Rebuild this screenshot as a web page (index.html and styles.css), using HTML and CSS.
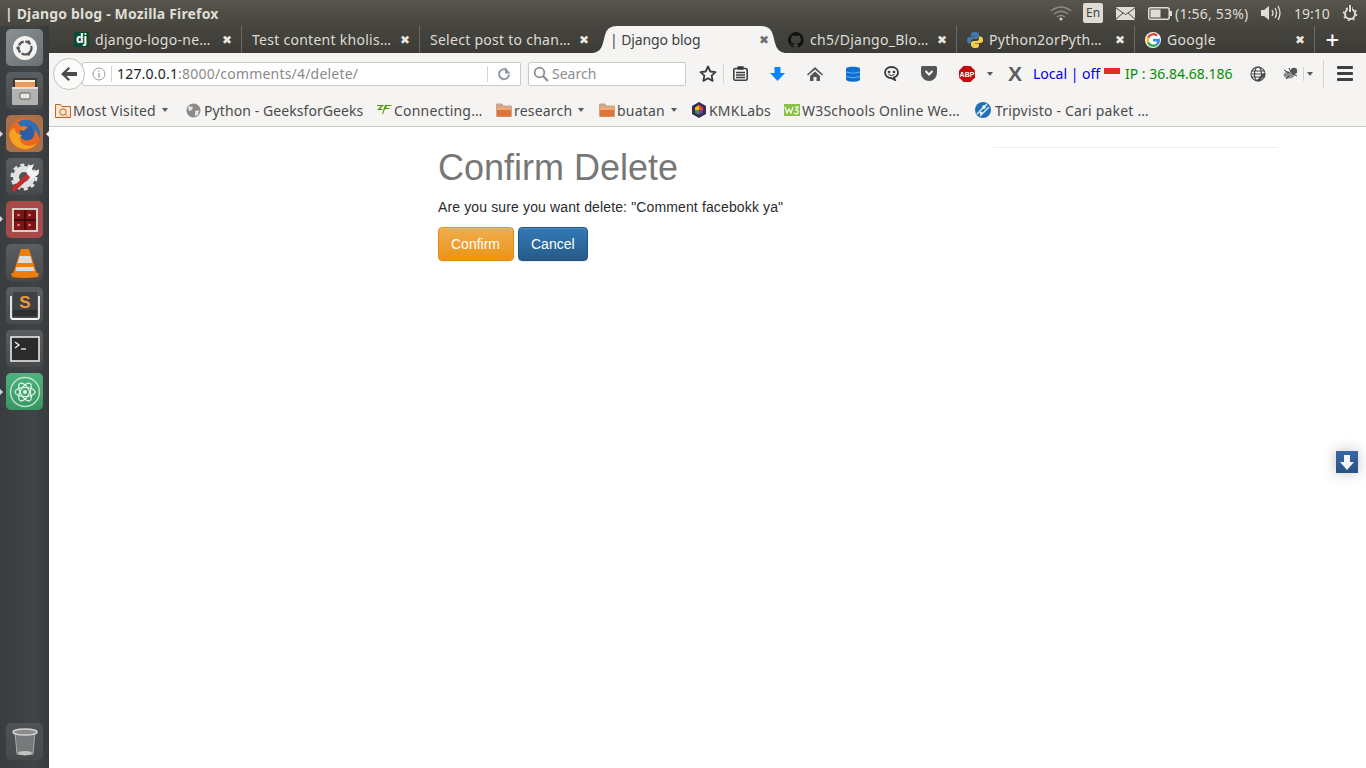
FILE: index.html
```html
<!DOCTYPE html>
<html lang="en">
<head>
<meta charset="utf-8">
<title>| Django blog</title>
<link rel="stylesheet" href="styles.css">
</head>
<body>
<div class="titlebar">
  <div class="wintitle">| Django blog - Mozilla Firefox</div>
  <div class="tray">
    <svg class="t-wifi" width="22" height="16" viewBox="0 0 22 16"><g fill="none" stroke="#8d8b84" stroke-width="1.5"><path d="M1 6q10-8 20 0"/><path d="M4 9q7-5.500 14 0"/><path d="M7 12q4-3 8 0"/></g><circle cx="11" cy="14" r="1.500" fill="#d8d6cf"/></svg>
    <span class="t-lang">En</span>
    <svg class="t-mail" width="19" height="13" viewBox="0 0 19 13"><rect width="19" height="13" rx="1" fill="#dfddd6"/><path d="M0 1l9.500 6.500L19 1M0 12l7-6M19 12l-7-6" fill="none" stroke="#4a4943" stroke-width="1"/></svg>
    <svg class="t-batt" width="24" height="13" viewBox="0 0 24 13"><rect x=".75" y=".75" width="20.500" height="11.500" rx="2" fill="none" stroke="#dfddd6" stroke-width="1.500"/><rect x="2.500" y="2.500" width="10" height="8" fill="#dfddd6"/><rect x="22" y="4" width="2" height="5" fill="#dfddd6"/></svg>
    <span class="t-text t-battext">(1:56, 53%)</span>
    <svg class="t-vol" width="20" height="16" viewBox="0 0 20 16"><path d="M0 5h3l5-4v14l-5-4H0z" fill="#dfddd6"/><g fill="none" stroke="#dfddd6" stroke-width="1.300"><path d="M11 5q2 3 0 6"/><path d="M14 3q3 5 0 10"/><path d="M17 1q4 7 0 14"/></g></svg>
    <span class="t-text t-clock">19:10</span>
    <svg class="t-power" width="16" height="16" viewBox="0 0 16 16"><circle cx="8" cy="9" r="5" fill="none" stroke="#dfddd6" stroke-width="2"/><circle cx="8" cy="9" r="6.500" fill="none" stroke="#dfddd6" stroke-width="1.500" stroke-dasharray="2 3.100"/><path d="M8 0v8" stroke="#46453f" stroke-width="4"/><path d="M8 0v7" stroke="#dfddd6" stroke-width="2"/></svg>
  </div>
</div>

<div class="shell">
  <aside class="launcher">
    <div class="tile t-dash"><svg width="26" height="26" viewBox="0 0 26 26"><circle cx="13" cy="13" r="12" fill="#f2f2f0"/><circle cx="13" cy="13" r="6.500" fill="none" stroke="#55585a" stroke-width="2.200" stroke-dasharray="6 1.500"/><circle cx="6" cy="13" r="1.700" fill="#55585a"/><circle cx="16.500" cy="7" r="1.700" fill="#55585a"/><circle cx="16.500" cy="19" r="1.700" fill="#55585a"/></svg></div>
    <div class="tile t-files"><svg width="30" height="30" viewBox="0 0 30 30"><path d="M3 2h24v10H3z" fill="#3d3a37"/><path d="M5 6h20v6H5z" fill="#ee9a5a"/><path d="M5 4h20v2H5z" fill="#f7f4ea"/><rect x="2" y="11" width="26" height="18" rx="1" fill="#b2b2b0"/><rect x="2" y="11" width="26" height="2" fill="#e0e0de"/><rect x="10" y="17" width="10" height="6" rx="1" fill="#e9e9e7" stroke="#5c5c5a"/></svg></div>
    <div class="tile t-firefox"><svg width="34" height="34" viewBox="0 0 32 32"><circle cx="16" cy="16" r="15" fill="#e8681f"/><path d="M9 5q9-6 18 2q5 7 3 14q-2-8-7-10q-3-2-6-1q-3 1-5-1z" fill="#2f6fb5"/><circle cx="18" cy="15" r="7" fill="#2a5ea6"/><path d="M1 16q1 9 9 13q10 4 17-4q-10 5-15-2q-2-4 1-6q-6-1-7-7q-4 2-5 6z" fill="#f4a21f"/><path d="M10 10q5-3 9 0q-3 1-4 3q-3 0-5-3z" fill="#f07a1e"/></svg></div>
    <div class="tile t-tools"><svg width="32" height="32" viewBox="0 0 32 32"><circle cx="15" cy="16" r="8" fill="none" stroke="#e2e2e2" stroke-width="6"/><circle cx="15" cy="16" r="12" fill="none" stroke="#e2e2e2" stroke-width="3" stroke-dasharray="4 3.500"/><path d="M5 28l15-14" stroke="#c22d2d" stroke-width="4.500" stroke-linecap="round"/><path d="M18 13q-1-8 7-10l-2 5 2 3 5-3q1 8-8 9z" fill="#f4f4f4"/></svg></div>
    <div class="tile t-red"><svg width="28" height="28" viewBox="0 0 28 28"><rect x="1" y="2" width="26" height="24" fill="#d3cfcb"/><rect x="3" y="4" width="22" height="20" fill="#7e1414"/><path d="M3 14h22M14 4v20" stroke="#2b0b0b" stroke-width="1.500"/><path d="M6 8l3 1-3 1M17 8l3 1-3 1M6 18l3 1-3 1M17 18l3 1-3 1" stroke="#ef7777" fill="none"/></svg></div>
    <div class="tile t-vlc"><svg width="30" height="32" viewBox="0 0 30 32"><path d="M11 2h8l8 25H3z" fill="#f07f09"/><path d="M9.600 9h10.800l2 7H7.600zM6.500 20h17l1 4h-19z" fill="#dcdcdc"/><path d="M1 26h28l-1 4q-13 2-26 0z" fill="#ec7d0c"/></svg></div>
    <div class="tile t-sublime"><svg width="32" height="30" viewBox="0 0 32 30"><path d="M2 5v21q0 2 2 2h24q2 0 2-2V5" fill="none" stroke="#f2f2f2" stroke-width="1.800"/><rect x="4" y="1" width="24" height="25" fill="#3f4143"/><rect x="4" y="19" width="24" height="6" fill="#2d2e30"/><text x="16" y="17" class="sub-s">S</text></svg></div>
    <div class="tile t-term"><svg width="30" height="26" viewBox="0 0 30 26"><rect x="1" y="1" width="28" height="24" fill="#2b2b2b" stroke="#e8e8e8" stroke-width="1.600"/><path d="M5 6l4 3-4 3" fill="none" stroke="#f2f2f2" stroke-width="1.300"/><path d="M11 13h5" stroke="#f2f2f2" stroke-width="1.300"/></svg></div>
    <div class="tile t-atom"><svg width="32" height="32" viewBox="0 0 32 32"><circle cx="16" cy="16" r="14.500" fill="none" stroke="#bfe6cd" stroke-width="1.300"/><g fill="none" stroke="#e4f5ea" stroke-width="1.200"><ellipse cx="16" cy="16" rx="10" ry="4.500"/><ellipse cx="16" cy="16" rx="10" ry="4.500" transform="rotate(60 16 16)"/><ellipse cx="16" cy="16" rx="10" ry="4.500" transform="rotate(120 16 16)"/></g><circle cx="16" cy="16" r="2" fill="#e4f5ea"/></svg></div>
    <div class="launcher-gap"></div>
    <div class="tile t-trash"><svg width="26" height="30" viewBox="0 0 26 30"><path d="M3 5l2 22q8 2 16 0l2-22" fill="#777a7b" stroke="#a9abab" stroke-width="1"/><ellipse cx="13" cy="5" rx="12" ry="3" fill="#8a8c8c" stroke="#d4d4d4" stroke-width="1.500"/><ellipse cx="13" cy="26" rx="7" ry="2" fill="#c2c4c4"/></svg></div>
    <span class="pip pip-ff-l"></span><span class="pip pip-red"></span><span class="pip pip-atom"></span><span class="pip pip-ff-r"></span>
  </aside>

  <div class="browser">
    <div class="tabs">
      <div class="tab t1"><span class="favicon dj">dj</span><span class="tabname">django-logo-ne…</span><span class="x">✖</span></div>
      <div class="tab"><span class="tabname">Test content kholis…</span><span class="x">✖</span></div>
      <div class="tab t3"><span class="tabname">Select post to chan…</span><span class="x">✖</span></div>
      <div class="tab active">
        <svg class="tabshape" width="192" height="28" viewBox="0 0 192 28"><path d="M0 28q8-1 10-10l2-8q2-9 12-9h144q10 0 12 9l2 8q2 9 10 10z" fill="#f5f4f2"/></svg>
        <span class="tabname">| Django blog</span><span class="x">✖</span>
      </div>
      <div class="tab t5"><svg class="favicon" width="16" height="16" viewBox="0 0 16 16"><path d="M8 0a8 8 0 0 0-2.500 15.600c.4.1.5-.2.500-.4v-1.400c-2.200.5-2.700-1-2.700-1-.4-.9-.9-1.200-.9-1.200-.7-.5.1-.5.100-.5.8.1 1.200.8 1.200.8.700 1.200 1.900.9 2.300.7.100-.5.300-.9.500-1.100-1.800-.2-3.700-.9-3.700-4 0-.9.300-1.600.8-2.100-.1-.2-.4-1 .1-2.100 0 0 .7-.2 2.200.8a7.600 7.600 0 0 1 4 0c1.500-1 2.200-.8 2.200-.8.400 1.100.2 1.900.1 2.100.5.600.8 1.300.8 2.100 0 3.100-1.900 3.700-3.700 3.900.3.300.6.800.6 1.500v2.200c0 .2.100.5.600.4A8 8 0 0 0 8 0z" fill="#111"/></svg><span class="tabname">ch5/Django_Blo…</span><span class="x">✖</span></div>
      <div class="tab"><svg class="favicon" width="16" height="16" viewBox="0 0 16 16"><path d="M8 0C4 0 4 1.500 4 3v1.500h4.200V5H2.500C1 5 0 6 0 8s1 3.500 2.500 3.500H4V9.500C4 8 5 7 6.500 7h3C11 7 12 6 12 4.500V3c0-1.500-1-3-4-3z" fill="#3f7cad"/><path d="M8 16c4 0 4-1.500 4-3v-1.500H7.800V11h5.700c1.500 0 2.500-1 2.500-3s-1-3.500-2.500-3.500H12v2C12 8 11 9 9.500 9h-3C5 9 4 10 4 11.500V13c0 1.500 1 3 4 3z" fill="#f5cf4b"/></svg><span class="tabname">Python2orPyth…</span><span class="x">✖</span></div>
      <div class="tab t7"><svg class="favicon" width="16" height="16" viewBox="0 0 16 16"><circle cx="8" cy="8" r="8" fill="#fff"/><path d="M8 3.200a4.800 4.800 0 0 1 3.300 1.300l1.700-1.700A7 7 0 0 0 2 5l2 1.600A4.800 4.800 0 0 1 8 3.200z" fill="#e94235"/><path d="M2 5a7 7 0 0 0 0 6l2-1.600a4.800 4.800 0 0 1 0-2.800z" fill="#fabb05"/><path d="M2 11a7 7 0 0 0 11 2.200l-2-1.500A4.800 4.800 0 0 1 4 9.400z" fill="#34a853"/><path d="M15 8l-.1-1.300H8v2.700h3.900A3.400 3.400 0 0 1 11 11.700l2 1.500A7 7 0 0 0 15 8z" fill="#4285f4"/></svg><span class="tabname">Google</span><span class="x">✖</span></div>
      <div class="newtab">+</div>
    </div>

    <div class="navbar">
      <div class="urlwrap">
        <div class="urlbar">
          <svg class="info" width="14" height="14" viewBox="0 0 14 14"><circle cx="7" cy="7" r="6" fill="none" stroke="#999" stroke-width="1"/><path d="M7 6v4.500M7 3.500v1.300" stroke="#999" stroke-width="1.300"/></svg>
          <span class="ubar"></span>
          <span class="url"><span class="host">127.0.0.1</span>:8000/comments/4/delete/</span>
          <span class="ubar ubar-r"></span>
          <svg class="reload" width="14" height="14" viewBox="0 0 14 14"><path d="M12 7.500A5 5 0 1 1 9.800 3" fill="none" stroke="#8a9aa8" stroke-width="2"/><path d="M8 0v6.500h5.500z" fill="#8a9aa8"/></svg>
        </div>
        <div class="backbtn"><svg width="16" height="14" viewBox="0 0 16 14"><path d="M7.500 0l1.500 1.500L5.500 5H16v4H5.500L9 12.500 7.500 14 0 7z" fill="#4c4c4c"/></svg></div>
      </div>
      <div class="searchbar">
        <svg width="16" height="16" viewBox="0 0 16 16"><circle cx="6.500" cy="6.500" r="4.800" fill="none" stroke="#8f8f8f" stroke-width="1.800"/><path d="M10 10l5 5" stroke="#8f8f8f" stroke-width="2.200"/></svg>
        <span>Search</span>
      </div>
      <div class="tools">
        <span class="slot s-star"><svg width="18" height="17" viewBox="0 0 18 17"><path d="M9 1.500l2.300 5 5.200.6-3.900 3.500 1.100 5.300L9 13.200l-4.700 2.700 1.100-5.300-3.900-3.500 5.200-.6z" fill="none" stroke="#3c3c3c" stroke-width="1.800" stroke-linejoin="round"/></svg></span>
        <span class="vsep"></span>
        <span class="slot s-clip"><svg width="15" height="15" viewBox="0 0 15 15"><rect x=".8" y="2.500" width="13.400" height="11.700" rx="1.500" fill="none" stroke="#3f3f3f" stroke-width="1.600"/><path d="M5 1h5v2H5zM3 6.500h9M3 9h9M3 11.500h9" stroke="#3f3f3f" stroke-width="1.400"/></svg></span>
        <span class="slot s-icon"><svg width="15" height="14" viewBox="0 0 15 14"><path d="M4.500 0h6v6H15l-7.500 8L0 6h4.500z" fill="#0a84ff"/></svg></span>
        <span class="slot s-icon"><svg width="16" height="14" viewBox="0 0 16 14"><path d="M8 0L0 7.500l1 1L8 2.500l7 6 1-1zM3 9l5-4.500L13 9v5H9.500v-4h-3v4H3z" fill="#555"/></svg></span>
        <span class="slot s-icon"><svg width="14" height="16" viewBox="0 0 14 16"><path d="M0 2.500C0 0 14 0 14 2.500v11c0 3-14 3-14 0z" fill="#0f6fd1"/><path d="M0 6q7 2.500 14 0M0 10.500q7 2.500 14 0" fill="none" stroke="#63b2f2" stroke-width="1"/></svg></span>
        <span class="slot s-icon"><svg width="15" height="15" viewBox="0 0 15 15"><path d="M7.500 1C3.500 1 1 3.500 1 6.500S3.500 12 7 12l4 2-1-2.600c2.500-.8 4-2.600 4-4.900C14 3.500 11.500 1 7.500 1z" fill="none" stroke="#383838" stroke-width="1.800"/><circle cx="5" cy="6" r="1.300" fill="#383838"/><circle cx="10" cy="6" r="1.300" fill="#383838"/><path d="M4.500 8.500q3 2 6 0" fill="none" stroke="#383838"/></svg></span>
        <span class="slot s-icon"><svg width="16" height="15" viewBox="0 0 16 15"><path d="M1.500 0h13A1.500 1.500 0 0 1 16 1.500V7a8 8 0 0 1-16 0V1.500A1.500 1.500 0 0 1 1.500 0z" fill="#555"/><path d="M4.500 5L8 8.500 11.500 5" fill="none" stroke="#f5f4f2" stroke-width="2"/></svg></span>
        <span class="slot s-icon"><svg width="18" height="18" viewBox="0 0 18 18"><path d="M5.500 1h7L17 5.500v7L12.500 17h-7L1 12.500v-7z" fill="#c40c0c"/><text x="9" y="12" class="abp">ABP</text></svg></span>
        <span class="caret c-abp"></span>
        <span class="x-logo">X</span>
        <span class="local">Local | off</span>
        <span class="flag"></span>
        <span class="ip">IP : 36.84.68.186</span>
        <span class="slot s-globe"><svg width="16" height="16" viewBox="0 0 16 16"><g fill="none" stroke="#444" stroke-width="1.100"><circle cx="8" cy="8" r="7"/><ellipse cx="8" cy="8" rx="3.500" ry="7"/><path d="M1.500 5h13M1.500 8h13M1.500 11h13"/></g><path d="M7 14l7-7 1.500 1.500-7 7z" fill="#444"/></svg></span>
        <span class="slot s-bug"><svg width="16" height="13" viewBox="0 0 16 13"><ellipse cx="6" cy="8" rx="5.500" ry="3.500" fill="#8d8d8d"/><circle cx="11" cy="4" r="3.200" fill="#555"/><path d="M1 3l5 3M6 1l2 4M3 12l3-3M14 9l-4-2" stroke="#333"/></svg></span>
        <span class="vsep v-bug"></span>
        <span class="caret c-bug"></span>
        <span class="vsep v-menu"></span>
        <span class="burger"><i></i><i></i><i></i></span>
      </div>
    </div>

    <div class="bookmarks">
      <span class="bm b-most"><svg width="16" height="16" viewBox="0 0 16 16"><path d="M.5 2.500h5l1.500 2h8.500v11H.5z" fill="#fbe6d3" stroke="#c8641f"/><circle cx="8" cy="10" r="3.200" fill="none" stroke="#c8641f"/><path d="M10.500 12.500l2 2" stroke="#c8641f"/></svg>Most Visited<span class="caret"></span></span>
      <span class="bm b-py"><svg width="15" height="15" viewBox="0 0 15 15"><circle cx="7.500" cy="7.500" r="7" fill="#8a8a8a"/><path d="M3 3l4 1-1 3-3 1-1-3zM9 8l4-1-1 5-3 1z" fill="#e2e2e2"/></svg>Python - GeeksforGeeks</span>
      <span class="bm b-zf"><svg width="16" height="10" viewBox="0 0 16 10"><path d="M1 0h7L4 4h3L6 5H1l4-4H1zM9 0h7l-1 1h-4l-1 2h4l-1 1h-4l-2 5H6z" fill="#4d9a06"/></svg>Connecting…</span>
      <span class="bm b-res"><svg class="fold" width="16" height="14" viewBox="0 0 16 14"><path d="M0 1.500Q0 .500 1 .500h5l1.500 2H15q1 0 1 1V13q0 1-1 1H1q-1 0-1-1z" fill="#c9a58c"/><path d="M1 4h14v9.500H1z" fill="#df7437"/><path d="M1 4h14v3H1z" fill="#efa779"/></svg>research<span class="caret"></span></span>
      <span class="bm b-but"><svg class="fold" width="16" height="14" viewBox="0 0 16 14"><path d="M0 1.500Q0 .500 1 .500h5l1.500 2H15q1 0 1 1V13q0 1-1 1H1q-1 0-1-1z" fill="#c9a58c"/><path d="M1 4h14v9.500H1z" fill="#df7437"/><path d="M1 4h14v3H1z" fill="#efa779"/></svg>buatan<span class="caret"></span></span>
      <span class="bm b-kmk"><svg width="16" height="16" viewBox="0 0 16 16"><path d="M8 0l7 4v8l-7 4-7-4V4z" fill="#3a2a55"/><path d="M8 3L4 5.500V8h4z" fill="#f4c20d"/><path d="M8 3l4 2.500V8H8z" fill="#e8452c"/><path d="M4 8v2.500L8 13V8z" fill="#2f9e44"/><path d="M12 8v2.500L8 13V8z" fill="#6a3fb5"/></svg>KMKLabs</span>
      <span class="bm b-w3"><svg width="16" height="12" viewBox="0 0 16 12"><rect width="16" height="12" fill="#8ac249"/><path d="M1 3l2 6 2-4 2 4 2-6M11 3h3l-2 3q3 0 2 2.500T10 9" fill="none" stroke="#fff" stroke-width="1.200"/></svg>W3Schools Online We…</span>
      <span class="bm b-trip"><svg width="16" height="16" viewBox="0 0 16 16"><circle cx="8" cy="8" r="8" fill="#1f6fb5"/><path d="M2 12L12 2M5 14L14 5" stroke="#dbeeff" stroke-width="1.500"/><circle cx="9" cy="5" r="1.800" fill="#fff"/><circle cx="6" cy="11" r="1.300" fill="#fff"/></svg>Tripvisto - Cari paket …</span>
    </div>

    <main class="page">
      <section class="content">
        <h1>Confirm Delete</h1>
        <p>Are you sure you want delete: "Comment facebokk ya"</p>
        <div class="actions">
          <a class="btn btn-warning">Confirm</a>
          <a class="btn btn-primary">Cancel</a>
        </div>
      </section>
      <aside class="side"><hr></aside>
      <div class="floatdown"><svg width="14" height="15" viewBox="0 0 14 15"><path d="M4 0h6v7h4l-7 8-7-8h4z" fill="#f2f5fa"/></svg></div>
    </main>
  </div>
</div>
</body>
</html>
```
FILE: styles.css
```css
* { box-sizing: border-box; }
html, body { margin: 0; height: 100%; overflow: hidden; }
body {
  width: 1366px;
  height: 768px;
  display: flex;
  flex-direction: column;
  font-family: "Noto Sans", "Open Sans", sans-serif;
  background: #fff;
}

/* top panel */
.titlebar {
  height: 26px;
  flex: none;
  display: flex;
  align-items: center;
  justify-content: space-between;
  padding: 0 8px 0 5px;
  background: linear-gradient(#57554c, #46453f);
  color: #dfddd6;
}
.wintitle { font-size: 14px; font-weight: 700; white-space: nowrap; letter-spacing: .17px; }
.tray { display: flex; align-items: center; height: 26px; }
.t-text { font-size: 14px; color: #dfddd6; white-space: nowrap; }
.t-lang {
  width: 20px; height: 20px; margin-left: 11px;
  background: #dedcd4; color: #45443e; border-radius: 2px;
  font-size: 12px; text-align: center; line-height: 20px;
}
.t-mail { margin-left: 13px; }
.t-batt { margin-left: 13px; }
.t-battext { margin-left: 3px; width: 77px; letter-spacing: .2px; }
.t-vol { margin-left: 9px; }
.t-clock { margin-left: 13px; width: 36px; }
.t-power { margin-left: 12px; }

.shell { flex: 1; display: flex; min-height: 0; }

/* launcher */
.launcher {
  position: relative;
  width: 49px;
  flex: none;
  display: flex;
  flex-direction: column;
  align-items: center;
  gap: 6px;
  padding: 3px 0 8px;
  background: linear-gradient(90deg, #3a3d3f, #414446 70%, #37393b);
}
.tile {
  width: 37px; height: 37px; flex: none;
  display: flex; align-items: center; justify-content: center;
  border-radius: 5px;
  background: linear-gradient(#5b5e60, #47494b);
}
.t-dash { background: linear-gradient(135deg, #8b9193, #6b7072); }
.t-firefox { background: #a9714a; }
.t-red { background: #a84a4a; }
.t-atom { background: linear-gradient(#4fb27f, #389663); }
.t-trash { background: linear-gradient(#4f5254, #484a4c); }
.launcher-gap { flex: 1; }
.sub-s { font: 700 17px "Liberation Sans", sans-serif; fill: #ef9a3e; text-anchor: middle; }
.pip {
  position: absolute; left: 0; width: 0; height: 0;
  border-left: 3px solid #d8d8d8; border-top: 3px solid transparent; border-bottom: 3px solid transparent;
}
.pip-ff-l { top: 105px; }
.pip-ff-r {
  top: 105px; left: auto; right: 0;
  border-left: 0; border-right: 3px solid #f0f0f0;
}
.pip-red { top: 190px; }
.pip-atom { top: 363px; }

.browser { flex: 1; min-width: 0; display: flex; flex-direction: column; }

/* tabs */
.tabs {
  height: 27px;
  flex: none;
  display: flex;
  padding-left: 15px;
  background: linear-gradient(#46453f, #3c3b36);
  color: #dfddd6;
  font-size: 14px;
  letter-spacing: .27px;
}
.tab {
  position: relative;
  width: 178px;
  display: flex;
  align-items: center;
  gap: 6px;
  padding: 0 9px 0 10px;
  border-right: 1px solid #6a6963;
  white-space: nowrap;
}
.tab.t1 { padding-left: 10px; }
.tab.t3 { border-right: 0; }
.tab.t5 { width: 177px; padding-left: 8px; }
.tab.t7 { width: 180px; padding-left: 10px; }
.tabname { flex: 1; overflow: hidden; position: relative; }
.favicon { flex: none; }
.dj {
  width: 15px; height: 15px; background: #0c4b33; color: #fff; letter-spacing: 0;
  font: 700 12px/14px "Noto Sans", sans-serif; text-align: center; border-radius: 1px;
}
.x { flex: none; font-size: 12px; color: #e8e6e0; position: relative; font-family: "DejaVu Sans", sans-serif; letter-spacing: 0; }
.tab.active {
  width: 182px;
  color: #3f3f3f;
  border-right: 0;
  padding: 0 11px 0 12px;
  letter-spacing: -.1px;
}
.tab.active .x { color: #6d6d6d; }
.tabshape { position: absolute; left: -5px; top: -1px; }
.newtab { width: 35px; text-align: center; font-size: 24px; line-height: 27px; color: #fff; font-weight: 500; }

/* nav toolbar */
.navbar {
  height: 41px;
  flex: none;
  display: flex;
  align-items: center;
  padding-left: 4px;
  background: #f5f4f2;
}
.urlwrap { position: relative; padding-left: 29px; flex: none; }
.urlbar {
  width: 439px; height: 24px;
  display: flex; align-items: center;
  padding: 0 9px 0 9px;
  background: #fff;
  border: 1px solid #c9c9c6;
  border-radius: 2px;
  font-size: 14px;
}
.backbtn {
  position: absolute; left: 0; top: -4px;
  width: 32px; height: 32px; border-radius: 50%;
  background: #fbfbfa; border: 1px solid #c2c2bf;
  display: flex; align-items: center; justify-content: center;
}
.ubar { width: 1px; height: 16px; background: #d4d4d2; margin: 0 5px 0 5px; flex: none; }
.ubar-r { margin: 0 9px 0 0; }
.url { flex: 1; color: #8a8a8a; white-space: nowrap; letter-spacing: .2px; }
.host { color: #222; }
.searchbar {
  margin-left: 7px;
  width: 158px; height: 24px;
  display: flex; align-items: center; gap: 3px;
  padding-left: 4px;
  background: #fff;
  border: 1px solid #c9c9c6;
  border-radius: 2px;
  color: #8d8d8d; font-size: 14px;
}
.tools { flex: 1; display: flex; align-items: center; height: 100%; }
.slot { display: flex; align-items: center; justify-content: center; flex: none; }
.s-star { width: 22px; margin-left: 11px; }
.vsep { width: 1px; height: 19px; background: #d2d2cf; flex: none; margin-left: 4px; }
.s-clip { width: 18px; margin-left: 7px; }
.s-icon { width: 38px; }
.s-clip + .s-icon { margin-left: 9px; }
.abp { font: 700 7px "Liberation Sans", sans-serif; fill: #fff; text-anchor: middle; }
.caret {
  display: inline-block; width: 0; height: 0; flex: none;
  border-top: 4px solid #5a5a5a; border-left: 3px solid transparent; border-right: 3px solid transparent;
}
.c-abp { margin-left: 1px; }
.x-logo { width: 20px; margin-left: 15px; font: 700 21px/24px "Liberation Sans", sans-serif; color: #5e5e5e; flex: none; }
.local { margin-left: 5px; color: #0000ee; font-size: 14px; white-space: nowrap; width: 67px; flex: none; }
.flag {
  width: 16px; height: 11px; flex: none; margin-left: 4px;
  background: linear-gradient(#e22d2d 50%, #f5f5f5 50%);
}
.ip { margin-left: 5px; color: #078c07; font-size: 14px; white-space: nowrap; width: 88px; flex: none; }
.s-globe { width: 18px; margin-left: 36px; }
.s-bug { width: 18px; margin-left: 15px; }
.v-bug { margin-left: 3px; height: 14px; }
.c-bug { margin-left: 3px; }
.v-menu { margin-left: 10px; height: 28px; }
.burger { margin-left: 13px; width: 16px; display: flex; flex-direction: column; gap: 3px; flex: none; }
.burger i { display: block; height: 3px; background: #3f3f3f; border-radius: 1px; }

/* bookmarks */
.bookmarks {
  height: 33px;
  flex: none;
  display: flex;
  align-items: center;
  padding-left: 6px;
  background: #f5f4f2;
  border-bottom: 1px solid #c9c9c6;
  color: #4b4b4b;
  font-size: 14px;
  letter-spacing: .2px;
  white-space: nowrap;
}
.bm { display: flex; align-items: center; gap: 2px; flex: none; }
.bm .caret { margin-left: 4px; }
.b-most { width: 131px; }
.b-py { width: 190px; gap: 3px; letter-spacing: .08px; }
.b-zf { width: 120px; }
.b-res { width: 103px; }
.b-but { width: 92px; }
.b-kmk { width: 93px; }
.b-w3 { width: 191px; }
.b-trip { gap: 4px; }

/* page */
.page {
  flex: 1;
  position: relative;
  display: flex;
  padding-left: 389px;
  background: #fff;
  font-family: "Liberation Sans", Arial, sans-serif;
  font-size: 14px;
  line-height: 20px;
  color: #2b2b2b;
}
.content { width: 555px; flex: none; padding-top: 21px; }
h1 { margin: 0 0 9px; font-size: 36px; line-height: 40px; font-weight: 400; color: #777; }
p { margin: 0 0 10px; letter-spacing: .135px; }
.actions { display: flex; gap: 4px; }
.btn {
  display: block; height: 34px; padding: 6px 12px;
  border: 1px solid transparent; border-radius: 4px;
  color: #fff; line-height: 20px;
  box-shadow: inset 0 1px 0 rgba(255,255,255,.15), 0 1px 1px rgba(0,0,0,.075);
}
.btn-warning { background: linear-gradient(#f0ad4e, #eb9316); border-color: #e38d13; width: 76px; }
.btn-primary { background: linear-gradient(#337ab7, #265a88); border-color: #245580; }
.side { width: 285px; flex: none; padding-top: 20px; }
.side hr { margin: 0; border: 0; border-top: 1px solid #eee; }
.floatdown {
  position: absolute; right: 8px; top: 324px;
  width: 22px; height: 22px;
  display: flex; align-items: center; justify-content: center;
  background: linear-gradient(#3a66a5, #2c4f85);
  box-shadow: 0 0 14px rgba(0,0,0,.25);
}
```
